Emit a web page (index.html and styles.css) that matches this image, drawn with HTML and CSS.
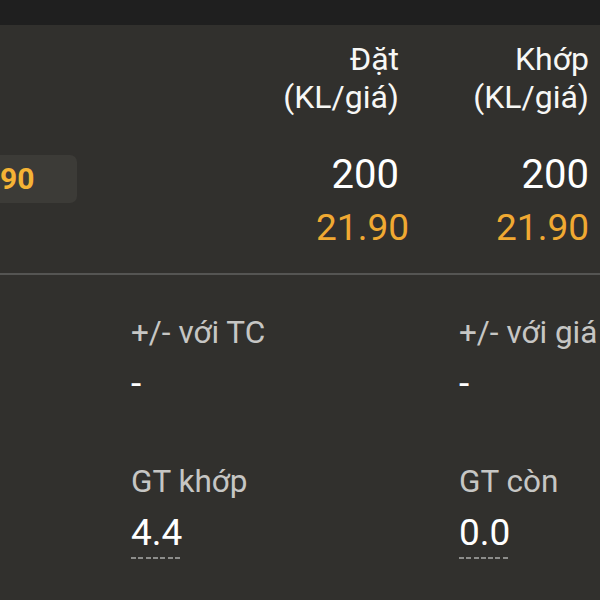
FILE: index.html
```html
<!DOCTYPE html>
<html lang="vi">
<head>
<meta charset="utf-8">
<title>Lệnh</title>
<link rel="stylesheet" href="styles.css">
</head>
<body>
<div class="topbar"></div>
<section class="orders">
  <div class="cell lead">
    <div class="badge">90</div>
  </div>
  <div class="cell col col-a">
    <div class="head">Đặt<br>(KL/giá)</div>
    <div class="qty">200</div>
    <div class="price shift">21.90</div>
  </div>
  <div class="cell col col-b">
    <div class="head">Khớp<br>(KL/giá)</div>
    <div class="qty">200</div>
    <div class="price">21.90</div>
  </div>
</section>
<div class="divider"></div>
<section class="stats">
  <div class="stat">
    <div class="label">+/- với TC</div>
    <div class="value">-</div>
  </div>
  <div class="stat">
    <div class="label">+/- với giá</div>
    <div class="value">-</div>
  </div>
  <div class="stat row2">
    <div class="label">GT khớp</div>
    <div class="value"><span class="dotted">4.4</span></div>
  </div>
  <div class="stat row2">
    <div class="label">GT còn</div>
    <div class="value"><span class="dotted">0.0</span></div>
  </div>
</section>
</body>
</html>
```

FILE: styles.css
```css
html, body {
  margin: 0;
  padding: 0;
}
body {
  width: 600px;
  height: 600px;
  overflow: hidden;
  background: #31302d;
  font-family: Roboto, "Noto Sans", sans-serif;
  color: #f6f6f4;
}
.topbar {
  height: 25px;
  background: #1f1f1f;
}
.orders {
  display: grid;
  grid-template-columns: 1fr 190px 190px;
  height: 248px;
}
.lead {
  padding-top: 130px;
}
.badge {
  width: 77px;
  height: 48px;
  box-sizing: border-box;
  background: #3c3b37;
  border-radius: 0 7px 7px 0;
  font-size: 30px;
  font-weight: 700;
  line-height: 48px;
  color: #f5b335;
  white-space: nowrap;
  overflow: hidden;
}
.col {
  display: flex;
  flex-direction: column;
  align-items: flex-end;
  padding-right: 11px;
  padding-top: 15px;
}
.head {
  font-size: 32px;
  line-height: 38px;
  text-align: right;
  color: #f7f7f5;
}
.qty {
  margin-top: 31px;
  font-size: 40px;
  line-height: 56px;
  color: #ffffff;
}
.price {
  font-size: 37px;
  line-height: 50px;
  color: #f0a932;
}
.price.shift {
  margin-right: -10px;
}
.divider {
  height: 2px;
  background: #555553;
}
.stats {
  display: grid;
  grid-template-columns: 328px 328px;
  padding-left: 131px;
  padding-top: 38px;
  row-gap: 53px;
}
.stat {
  white-space: nowrap;
}
.label {
  font-size: 31.5px;
  line-height: 40px;
  color: #c6c6c4;
}
.value {
  margin-top: 6px;
  font-size: 37px;
  line-height: 50px;
  color: #ffffff;
}
.dotted {
  display: inline-block;
  padding-bottom: 1px;
  background-image: repeating-linear-gradient(to right, #8d8d8b 0 5px, transparent 5px 7.3px);
  background-size: 100% 2px;
  background-position: 0 100%;
  background-repeat: no-repeat;
}
```
